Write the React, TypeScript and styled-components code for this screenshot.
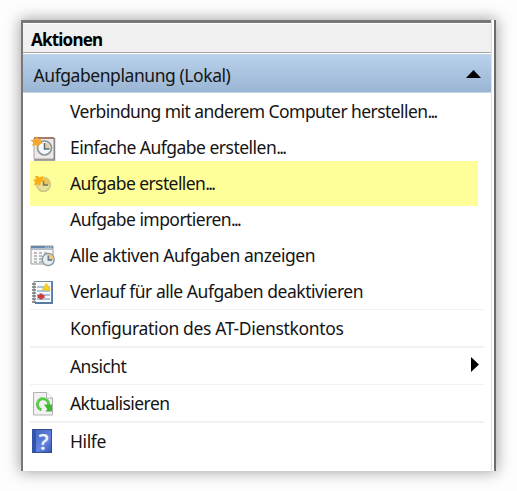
import React from "react";
import styled, { createGlobalStyle } from "styled-components";

const GlobalStyle = createGlobalStyle`
  *, *::before, *::after { box-sizing: border-box; }
  body { margin: 0; background: #fdfdfd; }
`;

const Page = styled.main`
  width: 517px;
  height: 491px;
  padding: 20px 21px 20px;
  overflow: hidden;
  font-family: "Noto Sans", "Open Sans", sans-serif;
  font-size: 17.5px;
  color: #151515;
`;

const Frame = styled.div`
  width: 475px;
  height: 451px;
  display: flex;
  background: #fff;
  border-left: 2px solid #777;
  border-right: 2px solid #6c6c6c;
  box-shadow: 0 0 14px 1px rgba(0, 0, 0, 0.36);
`;

const Panel = styled.section`
  width: 469px;
  border-right: 1px solid #dedede;
`;

const TitleBar = styled.header`
  height: 34px;
  padding: 5px 0 0 8px;
  border-top: 3px solid #777;
  border-bottom: 1px solid #fff;
  background: linear-gradient(#fff 0 1px, #f0f0f0 1px 29px, #a5a5a5 29px 30px, #fff 30px);
  font-size: 17px;
  font-weight: 700;
  color: #000;
`;

const GroupHeader = styled.div`
  height: 39px;
  padding: 3px 10px 0 10.5px;
  display: flex;
  align-items: center;
  justify-content: space-between;
  background: linear-gradient(#b8d1eb, #9ab5d4);
  border-top: 1px solid #c2d5e9;
  border-bottom: 1px solid #c7d7e8;
  svg { margin-bottom: 1px; }
`;

const List = styled.ul`
  margin: 0;
  padding: 1px 7px 0;
  list-style: none;
`;

const Row = styled.li<{ $marked?: boolean }>`
  position: relative;
  isolation: isolate;
  height: 36px;
  display: flex;
  align-items: center;
  justify-content: space-between;
  &::before {
    content: "";
    display: ${(p) => (p.$marked ? "block" : "none")};
    position: absolute;
    z-index: -1;
    inset: -5px 6px -4px 0;
    background: #ffff99;
  }
`;

const Separator = styled.li<{ $thick?: boolean }>`
  height: ${(p) => (p.$thick ? 2 : 1)}px;
  margin: -1px 0 1px;
  background: #f1f1f1;
`;

const Lead = styled.div`
  display: flex;
  align-items: center;
`;

const IconSlot = styled.span`
  width: 40px;
  height: 26px;
  flex: none;
  svg { display: block; }
`;

const Label = styled.span<{ $spacing?: number }>`
  display: block;
  white-space: pre;
  line-height: 24px;
  letter-spacing: ${(p) => p.$spacing ?? 0}px;
`;

const RowLabel = styled(Label)`
  padding-bottom: 2px;
`;

const Dots = styled.span`
  letter-spacing: -1.7px;
`;

const TaskClock = () => (
  <svg width="26" height="26" viewBox="0 0 26 26">
    <path d="M4 3h20v21H4z" fill="#eee9e4" stroke="#a9a5a4" />
    <path d="M4 2h20v2H4z" fill="#a87967" />
    <path d="M24.5 3v22H4" fill="none" stroke="#898385" strokeWidth="1.4" />
    <circle cx="14.5" cy="13" r="7" fill="#f4f8fa" stroke="#8b969d" strokeWidth="1.7" />
    <path d="M15 13.5V7.5a6 6 0 0 1 5 6z" fill="#e3cfa6" />
    <path d="M14.5 8v6h5" fill="none" stroke="#526875" strokeWidth="1.4" />
    <path d="m7 1 1.2 3.7L12 3 10.3 6.5 13 8.2 9 9l-1 3.6L5.5 9.8 2 11l1.4-3.4L0 5l4.5-.3z" fill="#f5a62b" />
  </svg>
);

const StarClock = () => (
  <svg width="26" height="26" viewBox="0 0 26 26">
    <circle cx="13.5" cy="13.5" r="6.8" fill="#e6e19a" stroke="#cfc780" strokeWidth="1.7" />
    <path d="M14 13.5V7.5a6 6 0 0 1 5.5 6z" fill="#e9c560" />
    <path d="M13.5 9.5v4.5h4.5" fill="none" stroke="#77704c" strokeWidth="1.4" />
    <path d="M5 5h3l1.5 1.5L13 5v3l2 2-4 1-1 4-3-2-3 2 1-4-2-2 3-1z" fill="#f9b016" />
  </svg>
);

const WindowClock = () => (
  <svg width="26" height="26" viewBox="0 0 26 26">
    <path d="M1 3h22v18H1z" fill="#f7f7f7" stroke="#999" />
    <path d="M1 3h22v2.5H1z" fill="#6588aa" />
    <path d="M15 4h1.5m1 0H19m1 0h1.5" stroke="#e1edf5" />
    <path d="M1.5 6.5h21" stroke="#bbb" />
    <path d="M4 10h3m2 0h3m2 0h3M4 13h3m2 0h3M4 16h3m2 0h3M4 19h3m2 0h3" stroke="#aaa" strokeWidth="1.3" />
    <circle cx="18.2" cy="16.5" r="6" fill="#e6eef3" stroke="#899ba7" strokeWidth="1.5" />
    <path d="M18.2 17V11a5.5 5.5 0 0 1 5.5 6z" fill="#efc783" />
    <path d="M18.2 12.5V17h4" fill="none" stroke="#567086" strokeWidth="1.3" />
  </svg>
);

const Journal = () => (
  <svg width="26" height="26" viewBox="0 0 26 26">
    <path d="M4 2.5h18.5v21H4z" fill="#f8fafb" stroke="#788797" />
    <path d="M22 2v22H5" fill="none" stroke="#557ca7" strokeWidth="1.8" />
    <path d="M7 8h13M7 12h13M7 16h13M7 20h13" stroke="#8fb2d4" strokeWidth="1.4" />
    <path d="M2 5h4M2 8h4M2 11h4M2 14h4M2 17h4M2 20h4M2 23h4" stroke="#777" strokeWidth="1.3" />
    <path d="m16.3 4.5 4 6.5h-8z" fill="#f9d11f" stroke="#ecc32f" />
    <path d="M9.5 14.5h3v1.5h2v3h-2v1.5h-3V19h-2v-3h2z" fill="#cc3a3a" />
  </svg>
);

const Refresh = () => (
  <svg width="26" height="26" viewBox="0 0 26 26">
    <path d="M3.5 1.5h13l6 5.5v17h-19z" fill="#f0f1f0" stroke="#b2b2b2" />
    <path d="M16.5 1.5V7h6" fill="#fff" stroke="#b2b2b2" />
    <path d="M11.5 18.8A5.6 5.6 0 1 1 18.6 14" fill="none" stroke="#58c84a" strokeWidth="3" />
    <path d="M14 13.5h8v7h-6.5l1.8-2.3z" fill="#3cb832" />
    <path d="M7 12c0-3 2-5.5 5.5-5.5" fill="none" stroke="#8adf77" strokeWidth="1" />
  </svg>
);

const HelpCover = styled.span`
  display: block;
  width: 20px;
  height: 24px;
  margin-left: 2px;
  border: 1px solid #344d85;
  border-left: 4px solid #3453aa;
  background: linear-gradient(135deg, #4668c4, #6385e0 60%, #3459b6);
  color: #eaf2f8;
  font-size: 22px;
  font-weight: 600;
  line-height: 22px;
  text-align: center;
`;

const Help = () => <HelpCover>?</HelpCover>;

const UpArrow = () => (
  <svg width="15" height="9" viewBox="0 0 15 9"><path d="M7.5 0 15 8H0z" fill="#000" /></svg>
);

const RightArrow = () => (
  <svg width="13" height="20" viewBox="0 0 13 20"><path d="M0 0 8 7.5 0 15z" fill="#000" /></svg>
);

type Action = {
  text: string;
  dots?: boolean;
  icon?: React.ReactNode;
  marked?: boolean;
  submenu?: boolean;
  separated?: "thin" | "thick";
  spacing?: number;
};

const actions: Action[] = [
  { text: "Verbindung mit anderem Computer herstellen", dots: true, spacing: -0.57 },
  { text: "Einfache Aufgabe erstellen", dots: true, icon: <TaskClock />, spacing: -0.52 },
  { text: "Aufgabe erstellen", dots: true, icon: <StarClock />, marked: true, spacing: -0.58 },
  { text: "Aufgabe importieren", dots: true, spacing: -0.55 },
  { text: "Alle aktiven Aufgaben anzeigen", icon: <WindowClock />, spacing: -0.43 },
  { text: "Verlauf für alle Aufgaben deaktivieren", icon: <Journal />, spacing: -0.47 },
  { text: "Konfiguration des AT-Dienstkontos", separated: "thin", spacing: -0.34 },
  { text: "Ansicht", submenu: true, separated: "thick", spacing: -0.6 },
  { text: "Aktualisieren", icon: <Refresh />, separated: "thin", spacing: -0.57 },
  { text: "Hilfe", icon: <Help />, separated: "thick", spacing: -0.4 },
];

export default function App() {
  return (
    <>
      <GlobalStyle />
      <Page>
        <Frame>
          <Panel>
            <TitleBar><Label $spacing={-0.8}>Aktionen</Label></TitleBar>
            <GroupHeader>
              <Label $spacing={-0.43}>Aufgabenplanung (Lokal)</Label>
              <UpArrow />
            </GroupHeader>
            <List>
              {actions.map((a) => (
                <React.Fragment key={a.text}>
                  {a.separated && <Separator $thick={a.separated === "thick"} />}
                  <Row $marked={a.marked}>
                    <Lead>
                      <IconSlot>{a.icon}</IconSlot>
                      <RowLabel $spacing={a.spacing}>{a.text}{a.dots && <Dots>...</Dots>}</RowLabel>
                    </Lead>
                    {a.submenu && <RightArrow />}
                  </Row>
                </React.Fragment>
              ))}
            </List>
          </Panel>
        </Frame>
      </Page>
    </>
  );
}
